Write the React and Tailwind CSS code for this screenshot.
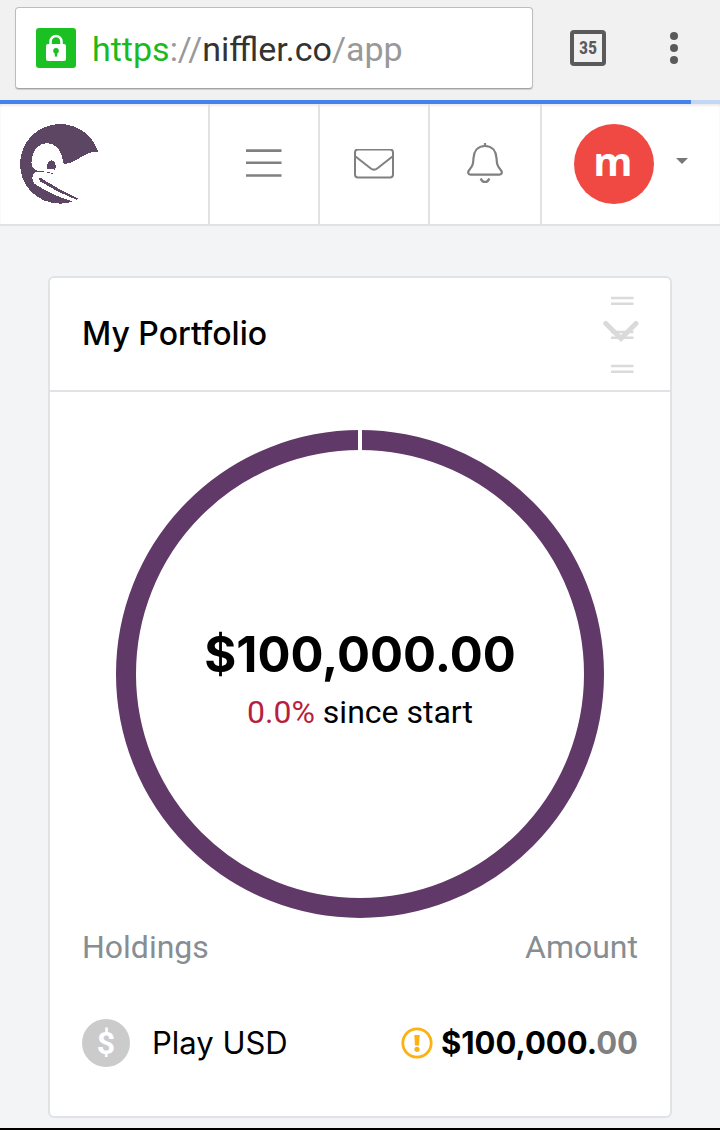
import { useState } from 'react'

const holdings = [
  { name: 'Play USD', symbol: '$', whole: '$100,000.', cents: '00' },
]

function AddressBar() {
  const [url, setUrl] = useState('https://niffler.co/app')
  const [editing, setEditing] = useState(false)
  const [, scheme, host, path] = url.match(/^(https?)?(?::\/\/)?([^/]*)(.*)$/) || []

  return (
    <div className="flex h-[82px] min-w-0 flex-1 items-center gap-4 rounded-[4px] border border-[#bdbdbd] border-b-[#a3a3a3] bg-white pl-5 shadow-[0_1px_1px_rgba(0,0,0,0.15)]">
      <svg viewBox="0 0 40 40" className="h-10 w-10 shrink-0">
        <rect width="40" height="40" rx="3" fill="#1bc123" />
        <path d="M14.5 17v-3.5a5.5 5.5 0 0 1 11 0V17" fill="none" stroke="#fff" strokeWidth="2.6" />
        <rect x="10" y="16" width="20" height="17" rx="2" fill="#fff" />
        <circle cx="20" cy="22.8" r="2.8" fill="#1bc123" />
        <path d="M18.8 23h2.4v5.6h-2.4z" fill="#1bc123" />
      </svg>
      {editing ? (
        <input
          type="text"
          aria-label="Address"
          autoFocus
          value={url}
          onChange={(e) => setUrl(e.target.value)}
          onBlur={() => setEditing(false)}
          className="min-w-0 flex-1 pt-0.5 text-[34px] leading-10 text-[#333] outline-none"
        />
      ) : (
        <button
          type="button"
          aria-label="Edit address"
          onClick={() => setEditing(true)}
          className="min-w-0 flex-1 truncate pt-0.5 text-left text-[34px] leading-10 text-[#999]"
        >
          <span className="text-[#1bb924]">{scheme}</span>
          {scheme && '://'}
          <span className="text-[#333]">{host}</span>
          {path}
        </button>
      )}
    </div>
  )
}

function BrowserBar() {
  return (
    <div className="bg-[#f1f1f1]">
      <div className="flex h-[100px] items-center pr-[26px] pb-1 pl-[15px]">
        <AddressBar />
        <button
          type="button"
          aria-label="Open tabs"
          className="ml-[37px] flex h-9 w-9 items-center justify-center rounded-[4px] border-4 border-[#5a5a5a] font-['Roboto_Condensed',Roboto,sans-serif] text-[18px] leading-none font-bold text-[#5a5a5a]"
        >
          35
        </button>
        <button type="button" aria-label="More" className="ml-12 flex h-10 w-10 items-center justify-center">
          <svg viewBox="0 0 8 32" className="h-8 w-2" fill="#5a5a5a">
            <circle cx="4" cy="4" r="4" />
            <circle cx="4" cy="16" r="4" />
            <circle cx="4" cy="28" r="4" />
          </svg>
        </button>
      </div>
      <div className="h-1 bg-[#c3d6f5]">
        <div className="h-1 w-[96%] bg-[#4583ec]" />
      </div>
    </div>
  )
}

function Logo() {
  return (
    <svg viewBox="0 0 240 240" className="h-20 w-20" fill="#5d4663" shapeRendering="crispEdges">
      <path d="M234 83C220 36 174 0 120 0C54 0 0 54 0 120C0 186 52 238 120 239C134 239 148 236 159 232C118 222 72 199 42 178C34 168 36 153 46 145L74 143L70 141L46 139C38 134 35 126 34 116C35 82 54 57 82 57C108 58 127 82 130 118C145 122 157 115 172 106C192 94 210 82 234 83Z" />
      <path d="M81 134C79 119 86 109 95 109C104 110 108 120 107 131L104 138L96 134Z" />
      <path d="M80 143l9 2v2l-9-2zM92 147l8 2v2l-8-2z" />
      <path d="M57 163C61 160 66 163 70 167C104 189 140 208 174 223L171 228C132 213 96 195 60 172Z" />
    </svg>
  )
}

function NavBar() {
  const cell = 'flex w-[110px] items-center justify-center border-r-2 border-[#e0e2e5]'
  return (
    <header className="flex h-[122px] border-b-2 border-[#e0e2e5] bg-white shadow-[inset_0_2px_2px_rgba(0,0,0,0.08)]">
      <a href="#home" aria-label="Niffler" className="flex w-[210px] items-center border-r-2 border-[#e0e2e5] pl-5">
        <Logo />
      </a>
      <nav className="flex">
        <button type="button" aria-label="Menu" className={cell}>
          <svg viewBox="0 0 36 30" className="h-[30px] w-9" stroke="#808080" strokeWidth="2.6">
            <path d="M0 1.6h35.5M0 13.8h35.5M0 26.5h35.5" />
          </svg>
        </button>
        <button type="button" aria-label="Messages" className={cell}>
          <svg viewBox="0 0 40 30" className="h-[30px] w-10" fill="none" stroke="#808080" strokeWidth="2">
            <rect x="1" y="0.5" width="38" height="28" rx="3" />
            <path d="M1.5 7.5L16.5 19.200Q20 22.100 23.5 19.200L38.5 7.5" />
          </svg>
        </button>
        <button type="button" aria-label="Notifications" className="flex w-28 items-center justify-center border-r-2 border-[#e0e2e5]">
          <svg viewBox="0 1 36 42" className="h-[42px] w-9" fill="none" stroke="#808080" strokeWidth="2.2">
            <path d="M18 1v3" />
            <path d="M18 4C10.5 4 7 9.5 6.5 16C6.2 21 6 24 2.6 27.6C.2 30 1 32.6 3.5 32.6H32.5C35 32.6 35.8 30 33.4 27.6C30 24 29.8 21 29.5 16C29 9.5 25.5 4 18 4Z" />
            <path d="M13.7 36.5Q15 40 18 40T22.3 36.5" />
          </svg>
        </button>
      </nav>
      <button type="button" aria-label="Account" className="flex flex-1 items-center gap-[22px] pl-8">
        <span className="flex h-20 w-20 items-center justify-center rounded-full bg-[#f04943] pr-0.5 pb-1.5 font-['Open_Sans',sans-serif] text-[40px] leading-none font-bold text-white">
          m
        </span>
        <svg viewBox="0 0 12 6" className="mb-1.5 h-1.5 w-3" fill="#777">
          <path d="M0 0h12L6 6z" />
        </svg>
      </button>
    </header>
  )
}

function CardTools() {
  return (
    <button type="button" aria-label="Collapse portfolio">
      <svg viewBox="0 0 36 80" className="h-20 w-9" fill="none" stroke="#dadada">
        <path d="M8 4h22.5M8 9.8h22.5M8 38h22.5M8 43.800h22.5M8 72h22.5M8 77.800h22.500" strokeWidth="2.6" />
        <path d="M2.8 29.5L18 44.5L33 29.5" strokeWidth="5" strokeLinecap="round" />
      </svg>
    </button>
  )
}

function BalanceRing() {
  return (
    <div className="mx-auto grid aspect-square w-full max-w-[488px] place-items-center">
      <svg viewBox="0 0 488 488" className="col-start-1 row-start-1 w-full">
        <circle cx="244" cy="244" r="234" fill="none" stroke="#603968" strokeWidth="20" />
        <path d="M244 0v22" stroke="#fff" strokeWidth="4" />
      </svg>
      <div className="col-start-1 row-start-1 pt-4 text-center">
        <p className="font-['Inter',sans-serif] text-[49px] leading-[60px] font-bold">$100,000.00</p>
        <p className="text-[32px] leading-[54px]">
          <span className="text-[#b71f40]">0.0%</span> since start
        </p>
      </div>
    </div>
  )
}

function Holdings() {
  return (
    <table className="w-full">
      <thead>
        <tr className="h-[58px] text-[32px] text-[#868e93]">
          <th scope="col" className="text-left font-normal">Holdings</th>
          <th scope="col" className="text-right font-normal">Amount</th>
        </tr>
      </thead>
      <tbody>
        {holdings.map((h) => (
          <tr key={h.name} className="h-[134px] font-['Inter',sans-serif] text-[31px]">
            <td>
              <div className="flex items-center gap-[22px]">
                <span className="flex h-12 w-12 items-center justify-center rounded-full bg-[#cbcbcb] font-['Roboto',sans-serif] text-[32px] leading-none font-bold text-white">
                  {h.symbol}
                </span>
                {h.name}
              </div>
            </td>
            <td>
              <div className="flex items-center justify-end gap-2 font-bold">
                <svg viewBox="0 0 32 32" className="h-8 w-8" fill="none" stroke="#fbb212">
                  <circle cx="16" cy="16" r="14.2" strokeWidth="2.8" />
                  <path d="M13.3 8h5.4l-.7 10.5h-4z" fill="#fbb212" stroke="none" />
                  <circle cx="16" cy="22.3" r="2.6" fill="#fbb212" stroke="none" />
                </svg>
                <span>
                  {h.whole}
                  <span className="text-[#808080]">{h.cents}</span>
                </span>
              </div>
            </td>
          </tr>
        ))}
      </tbody>
    </table>
  )
}

export default function App() {
  return (
    <div className="flex min-h-screen flex-col border-b-2 border-black bg-[#f3f4f6] font-['Roboto',sans-serif] text-black">
      <BrowserBar />
      <NavBar />
      <main className="px-12 pt-[50px] pb-2.5">
        <section className="rounded-[6px] border-2 border-[#e0e2e5] bg-white">
          <div className="flex h-[114px] items-center justify-between border-b-2 border-[#e0e2e5] pr-[31px] pl-8">
            <h1 className="font-['Inter',sans-serif] text-[32px] leading-10 font-medium">My Portfolio</h1>
            <CardTools />
          </div>
          <div className="px-8 pt-[38px] pb-[6px]">
            <BalanceRing />
            <Holdings />
          </div>
        </section>
      </main>
    </div>
  )
}
